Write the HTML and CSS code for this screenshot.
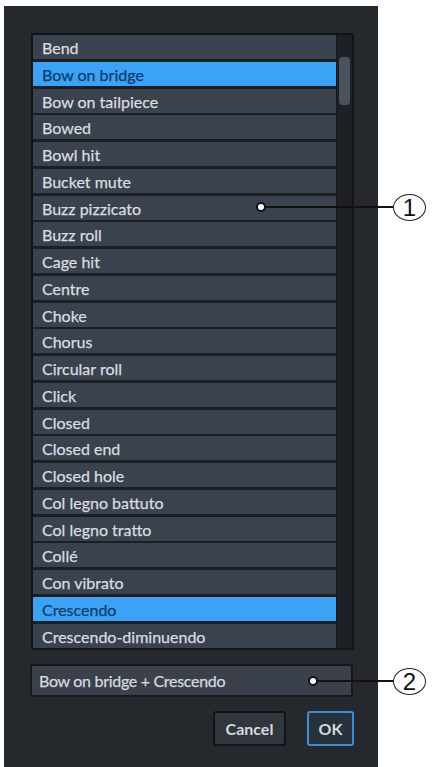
FILE: index.html
```html
<!DOCTYPE html>
<html>
<head>
<meta charset="utf-8">
<link rel="stylesheet" href="styles.css">
</head>
<body>
<div class="dialog">
  <div class="list">
    <div class="rows">
      <div class="row">Bend</div>
      <div class="row sel">Bow on bridge</div>
      <div class="row">Bow on tailpiece</div>
      <div class="row">Bowed</div>
      <div class="row">Bowl hit</div>
      <div class="row">Bucket mute</div>
      <div class="row">Buzz pizzicato</div>
      <div class="row">Buzz roll</div>
      <div class="row">Cage hit</div>
      <div class="row">Centre</div>
      <div class="row">Choke</div>
      <div class="row">Chorus</div>
      <div class="row">Circular roll</div>
      <div class="row">Click</div>
      <div class="row">Closed</div>
      <div class="row">Closed end</div>
      <div class="row">Closed hole</div>
      <div class="row">Col legno battuto</div>
      <div class="row">Col legno tratto</div>
      <div class="row">Collé</div>
      <div class="row">Con vibrato</div>
      <div class="row sel">Crescendo</div>
      <div class="row">Crescendo-diminuendo</div>
    </div>
    <div class="scroll"><div class="thumb"></div></div>
  </div>
  <div class="field">Bow on bridge + Crescendo</div>
  <div class="buttons">
    <div class="btn cancel">Cancel</div>
    <div class="btn ok">OK</div>
  </div>
</div>

<div class="callout c1">
  <span class="dot"></span><span class="line"></span><span class="num">1</span>
</div>
<div class="callout c2">
  <span class="dot"></span><span class="line"></span><span class="num">2</span>
</div>
</body>
</html>
```
FILE: styles.css
```css
html, body {
  margin: 0;
  padding: 0;
  background: #ffffff;
}
body {
  width: 434px;
  height: 767px;
  position: relative;
  overflow: hidden;
  font-family: Lato, "Open Sans", sans-serif;
}
.dialog {
  margin: 6px 0 0 4px;
  width: 374px;
  height: 761px;
  box-sizing: border-box;
  background: #25292e;
  padding: 27px 24px 0 26px;
  display: flex;
  flex-direction: column;
}
.list {
  width: 323px;
  height: 617px;
  box-sizing: border-box;
  border: 2px solid #121416;
  border-radius: 2px;
  display: flex;
  background: #1b1e22;
  margin-left: 1px;
}
.rows {
  flex: 1;
  display: flex;
  flex-direction: column;
  gap: 2.75px;
}
.row {
  height: 24px;
  line-height: 25px;
  background: #3a424d;
  color: #d9dde0;
  font-size: 16px;
  padding-left: 9px;
  white-space: nowrap;
  -webkit-text-stroke: 0.25px #d9dde0;
}
.row.sel {
  background: #3aa3f5;
  color: #0c3b6e;
  -webkit-text-stroke: 0.25px #0c3b6e;
}
.scroll {
  width: 16px;
  background: #1d2024;
  border-left: 1px solid #15181b;
  padding-top: 22px;
  box-sizing: border-box;
  display: flex;
  justify-content: center;
}
.thumb {
  width: 11px;
  height: 48px;
  border-radius: 4px;
  background: #4b525b;
}
.field {
  margin-top: 14px;
  width: 323px;
  height: 33px;
  box-sizing: border-box;
  border: 2px solid #16191c;
  border-radius: 3px;
  background: #3a414b;
  color: #d6dadd;
  font-size: 16px;
  line-height: 30px;
  padding-left: 7px;
  letter-spacing: -0.3px;
  -webkit-text-stroke: 0.25px #d6dadd;
}
.buttons {
  margin-top: 14px;
  display: flex;
  justify-content: flex-end;
  gap: 21px;
}
.btn {
  height: 35px;
  box-sizing: border-box;
  border-radius: 3px;
  font-size: 16px;
  font-weight: 700;
  color: #d6dadd;
  display: flex;
  align-items: center;
  justify-content: center;
}
.cancel {
  width: 73px;
  background: #30363d;
  border: 2px solid #121416;
}
.ok {
  width: 47px;
  background: #27313b;
  border: 2px solid #3c8fd4;
}
.callout {
  position: absolute;
  display: flex;
  align-items: center;
  height: 28px;
}
.c1 { left: 256px; top: 193px; }
.c2 { left: 308px; top: 667px; }
.dot {
  width: 6px;
  height: 6px;
  border-radius: 50%;
  background: #ffffff;
  border: 2px solid #111111;
  flex: none;
}
.line {
  height: 2px;
  background: #111111;
  flex: none;
}
.c1 .line { width: 127px; }
.c2 .line { width: 75px; }
.num {
  width: 33px;
  height: 27px;
  box-sizing: border-box;
  border: 1.5px solid #222222;
  border-radius: 50%;
  background: #ffffff;
  color: #111111;
  font-family: "Liberation Sans", sans-serif;
  font-size: 24px;
  line-height: 25px;
  text-align: center;
  flex: none;
}
```
